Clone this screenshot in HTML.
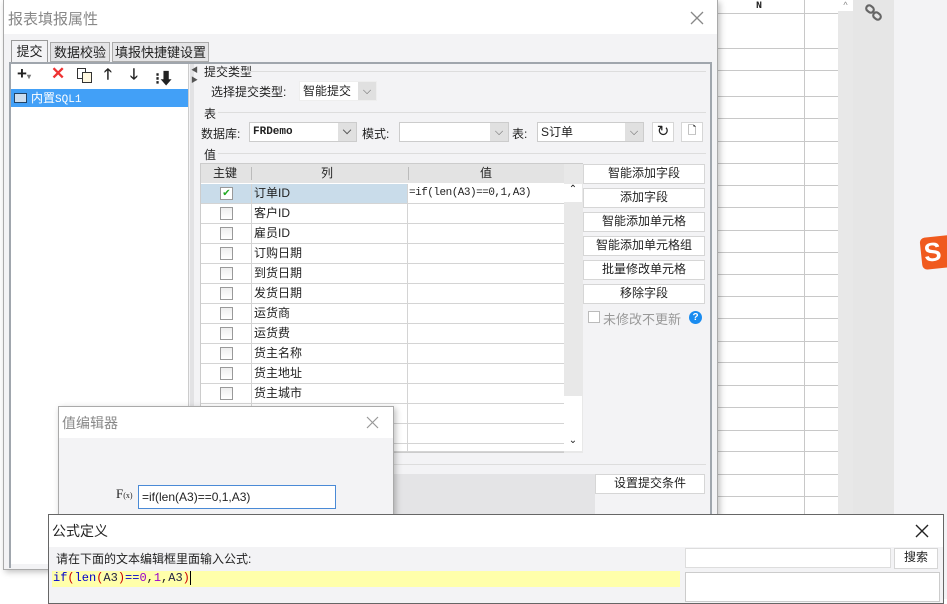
<!DOCTYPE html>
<html><head><meta charset="utf-8"><style>
*{margin:0;padding:0;box-sizing:border-box}
body{width:947px;height:599px;overflow:hidden;position:relative;background:#fff;font-family:"Liberation Sans","Noto Sans CJK SC",sans-serif;font-size:12px;color:#222}
.a{position:absolute}
.hl{position:absolute;left:718px;width:120px;height:1px;background:#c8c8c8}
.btn{position:absolute;background:#fff;border:1px solid #d6d6d6;text-align:center;line-height:17px;font-size:12px}
.cb{position:absolute;width:13px;height:13px;border:1px solid #999;background:linear-gradient(#eee,#fff)}
.row{position:absolute;left:201px;width:363px;height:20px;border-bottom:1px solid #d4d4d4}
.row .c2{position:absolute;left:50px;width:157px;height:19px;border-left:1px solid #d4d4d4;border-right:1px solid #d4d4d4;line-height:19px;padding-left:2px}
.row .cb{left:19px;top:3px}
.combo{position:absolute;background:#fff;border:1px solid #ccc;height:20px;line-height:18px;padding-left:3px}
.combo:after{content:"⌵";position:absolute;right:0;top:0;width:18px;height:18px;background:#e0e0e0;text-align:center;font-size:11px;color:#555}
</style></head><body>
<div class="a" style="left:0;top:0;width:947px;height:599px;background:#fff"></div>
<div class="a" style="left:756px;top:1px;font-size:10px;font-weight:bold;font-family:'Liberation Mono'">N</div>
<div class="hl" style="top:13px"></div><div class="hl" style="top:48px"></div><div class="hl" style="top:70px"></div><div class="hl" style="top:96px"></div><div class="hl" style="top:118px"></div><div class="hl" style="top:141px"></div><div class="hl" style="top:163px"></div><div class="hl" style="top:185px"></div><div class="hl" style="top:207px"></div><div class="hl" style="top:230px"></div><div class="hl" style="top:252px"></div><div class="hl" style="top:274px"></div><div class="hl" style="top:296px"></div><div class="hl" style="top:318px"></div><div class="hl" style="top:341px"></div><div class="hl" style="top:362px"></div><div class="hl" style="top:385px"></div><div class="hl" style="top:407px"></div><div class="hl" style="top:430px"></div><div class="hl" style="top:451px"></div><div class="hl" style="top:474px"></div><div class="hl" style="top:496px"></div>
<div class="a" style="left:804px;top:0;width:1px;height:599px;background:#c8c8c8"></div>
<div class="a" style="left:838px;top:0;width:15px;height:599px;background:#e8e8e8"></div>
<div class="a" style="left:838px;top:0;width:15px;height:11px;background:#fff;font-size:9px;text-align:center;color:#888">^</div>
<div class="a" style="left:853px;top:0;width:41px;height:599px;background:#e6e6e6"></div>
<div class="a" style="left:894px;top:0;width:53px;height:599px;background:#f3f3f5"></div>
<svg class="a" style="left:864px;top:4px" width="20" height="18" viewBox="0 0 20 18"><g fill="none" stroke="#666" stroke-width="2.2"><rect x="2" y="2" width="8" height="6" rx="3" transform="rotate(40 6 5)"/><rect x="9" y="9" width="8" height="6" rx="3" transform="rotate(40 13 12)"/></g></svg>
<div class="a" style="left:921px;top:236px;width:40px;height:32px;background:#f05a1e;border-radius:5px;transform:rotate(-6deg);color:#fff;font-weight:bold;font-size:26px;line-height:30px;padding-left:3px">S</div>
<div class="a" style="left:0;top:0;width:3px;height:599px;background:#fff"></div>

<div class="a" style="left:3px;top:0;width:715px;height:570px;background:#f3f3f5;border:1px solid #aaa;box-shadow:2px 2px 6px rgba(0,0,0,.25)"></div>
<div class="a" style="left:4px;top:0;width:713px;height:34px;background:#fff"></div>
<div class="a" style="left:8px;top:8px;font-size:15px;color:#888">报表填报属性</div>
<svg class="a" style="left:690px;top:11px" width="14" height="14"><path d="M1 1L13 13M13 1L1 13" stroke="#888" stroke-width="1.3"/></svg>
<div class="a" style="left:11px;top:40px;width:37px;height:23px;background:#f3f3f5;border:1px solid #999;border-bottom:none;text-align:center;line-height:22px;font-size:13px">提交</div>
<div class="a" style="left:50px;top:42px;width:60px;height:20px;background:#e4e4e6;border:1px solid #aaa;text-align:center;line-height:19px;font-size:13px">数据校验</div>
<div class="a" style="left:112px;top:42px;width:97px;height:20px;background:#e4e4e6;border:1px solid #aaa;text-align:center;line-height:19px;font-size:13px">填报快捷键设置</div>
<div class="a" style="left:9px;top:62px;width:703px;height:506px;border:2px solid #a0a6ad;border-bottom:none"></div>
<div class="a" style="left:11px;top:64px;width:178px;height:500px;background:#fff;border-right:1px solid #ccc"></div>
<div class="a" style="left:17px;top:64px;font-size:17px;font-weight:bold">+<span style="font-size:8px;color:#777">▾</span></div>
<div class="a" style="left:51px;top:64px;font-size:17px;color:#e33;font-weight:bold">✕</div>
<div class="a" style="left:77px;top:68px;width:9px;height:11px;border:1px solid #333;background:#fff"></div>
<div class="a" style="left:82px;top:72px;width:10px;height:11px;border:1px solid #333;background:#fff8e0"></div>
<div class="a" style="left:104px;top:64px;font-size:15px;font-weight:bold">🡑</div>
<div class="a" style="left:130px;top:64px;font-size:15px;font-weight:bold">🡓</div>
<div class="a" style="left:155px;top:65px;font-size:16px;font-weight:bold;letter-spacing:-2px">⁝⬇</div>
<div class="a" style="left:11px;top:89px;width:177px;height:18px;background:#42a0f7;color:#fff;font-size:12px;line-height:18px;padding-left:20px">内置<span style="font-family:'Liberation Mono';font-size:11px">SQL1</span></div>
<div class="a" style="left:14px;top:93px;width:13px;height:10px;border:1px solid #246;background:#cde"></div>
<div class="a" style="left:190px;top:64px;width:4px;height:500px;background:#e2e2e4"></div>
<div class="a" style="left:191px;top:65px;font-size:7px;color:#555">◀<br>▶</div>
<div class="a" style="left:204px;top:63px;font-size:12px">提交类型</div>
<div class="a" style="left:240px;top:71px;width:466px;height:1px;background:#ddd"></div>
<div class="a" style="left:211px;top:83px">选择提交类型:</div>
<div class="combo" style="left:299px;top:81px;width:78px;border-color:#eee">智能提交</div>
<div class="a" style="left:204px;top:105px">表</div>
<div class="a" style="left:218px;top:112px;width:488px;height:1px;background:#ddd"></div>
<div class="a" style="left:201px;top:125px">数据库:</div>
<div class="combo" style="left:249px;top:122px;width:108px;font-family:'Liberation Mono';font-size:11px;font-weight:bold">FRDemo</div>
<div class="a" style="left:362px;top:125px">模式:</div>
<div class="combo" style="left:399px;top:122px;width:110px"></div>
<div class="a" style="left:512px;top:125px">表:</div>
<div class="combo" style="left:537px;top:122px;width:107px">S订单</div>
<div class="btn" style="left:652px;top:122px;width:22px;height:20px;font-size:15px;line-height:17px">↻</div>
<div class="btn" style="left:681px;top:122px;width:22px;height:20px;font-size:11px">🗋</div>
<div class="a" style="left:204px;top:146px">值</div>
<div class="a" style="left:218px;top:153px;width:488px;height:1px;background:#ddd"></div>
<div class="a" style="left:200px;top:163px;width:383px;height:290px;background:#fff;border:1px solid #ccc"></div>
<div class="a" style="left:201px;top:164px;width:363px;height:19px;background:#e3e3e3;line-height:19px">
<span class="a" style="left:12px">主键</span><span class="a" style="left:120px">列</span><span class="a" style="left:279px">值</span>
<span class="a" style="left:50px;top:3px;width:1px;height:13px;background:#bbb"></span><span class="a" style="left:207px;top:3px;width:1px;height:13px;background:#bbb"></span></div>
<div class="a" style="left:564px;top:164px;width:19px;height:289px;background:#e8e8e8"></div>
<div class="a" style="left:564px;top:184px;width:18px;height:18px;background:#fff;text-align:center;font-size:10px">⌃</div>
<div class="a" style="left:564px;top:396px;width:18px;height:40px;background:#fff"></div>
<div class="a" style="left:564px;top:435px;width:18px;height:16px;background:#fff;text-align:center;font-size:10px">⌄</div>
<div class="row" style="top:184px;background:linear-gradient(90deg,#c9dcea 207px,#fff 207px)"><div class="cb" style="background:#fff;color:#2a2;font-size:10px;line-height:11px;text-align:center">✔</div><div class="c2">订单ID</div><span class="a" style="left:208px;line-height:19px;font-family:'Liberation Mono';font-size:11px;letter-spacing:-0.5px">=if(len(A3)==0,1,A3)</span></div>
<div class="row" style="top:204px"><div class="cb"></div><div class="c2">客户ID</div></div>
<div class="row" style="top:224px"><div class="cb"></div><div class="c2">雇员ID</div></div>
<div class="row" style="top:244px"><div class="cb"></div><div class="c2">订购日期</div></div>
<div class="row" style="top:264px"><div class="cb"></div><div class="c2">到货日期</div></div>
<div class="row" style="top:284px"><div class="cb"></div><div class="c2">发货日期</div></div>
<div class="row" style="top:304px"><div class="cb"></div><div class="c2">运货商</div></div>
<div class="row" style="top:324px"><div class="cb"></div><div class="c2">运货费</div></div>
<div class="row" style="top:344px"><div class="cb"></div><div class="c2">货主名称</div></div>
<div class="row" style="top:364px"><div class="cb"></div><div class="c2">货主地址</div></div>
<div class="row" style="top:384px"><div class="cb"></div><div class="c2">货主城市</div></div>
<div class="row" style="top:404px"><div class="cb"></div><div class="c2"></div></div>
<div class="row" style="top:424px"><div class="cb"></div><div class="c2"></div></div>
<div class="row" style="top:444px;height:8px"><div class="c2" style="height:8px"></div></div>
<div class="btn" style="left:583px;top:164px;width:122px;height:20px">智能添加字段</div>
<div class="btn" style="left:583px;top:188px;width:122px;height:20px">添加字段</div>
<div class="btn" style="left:583px;top:212px;width:122px;height:20px">智能添加单元格</div>
<div class="btn" style="left:583px;top:236px;width:122px;height:20px">智能添加单元格组</div>
<div class="btn" style="left:583px;top:260px;width:122px;height:20px">批量修改单元格</div>
<div class="btn" style="left:583px;top:284px;width:122px;height:20px">移除字段</div>
<div class="a" style="left:588px;top:311px;width:12px;height:12px;border:1px solid #bbb;background:#fff"></div>
<div class="a" style="left:603px;top:309px;color:#999;font-size:13px">未修改不更新</div>
<div class="a" style="left:689px;top:311px;width:13px;height:13px;border-radius:50%;background:#1a8cf0;color:#fff;font-size:10px;font-weight:bold;text-align:center;line-height:13px">?</div>
<div class="a" style="left:200px;top:464px;width:506px;height:1px;background:#ddd"></div>
<div class="a" style="left:200px;top:474px;width:395px;height:94px;background:#e4e4e6"></div>
<div class="btn" style="left:595px;top:474px;width:110px;height:20px">设置提交条件</div>

<div class="a" style="left:58px;top:406px;width:336px;height:120px;background:#f3f3f5;border:1px solid #aaa;box-shadow:2px 2px 6px rgba(0,0,0,.25)"></div>
<div class="a" style="left:59px;top:407px;width:334px;height:31px;background:#fff"></div>
<div class="a" style="left:62px;top:413px;font-size:14px;color:#888">值编辑器</div>
<svg class="a" style="left:366px;top:416px" width="13" height="13"><path d="M1 1L12 12M12 1L1 12" stroke="#999" stroke-width="1.2"/></svg>
<div class="a" style="left:116px;top:486px;font-family:'Liberation Serif';font-size:13px">F<span style="font-size:8px">(x)</span></div>
<div class="a" style="left:138px;top:485px;width:198px;height:24px;background:#fff;border:1px solid #4a8ad6;line-height:22px;padding-left:3px">=if(len(A3)==0,1,A3)</div>

<div class="a" style="left:48px;top:514px;width:896px;height:90px;background:#f3f3f5;border:1px solid #666"></div>
<div class="a" style="left:49px;top:515px;width:894px;height:32px;background:#fff"></div>
<div class="a" style="left:52px;top:521px;font-size:14px">公式定义</div>
<svg class="a" style="left:915px;top:524px" width="14" height="14"><path d="M1 1L13 13M13 1L1 13" stroke="#222" stroke-width="1.4"/></svg>
<div class="a" style="left:56px;top:550px;font-size:12px">请在下面的文本编辑框里面输入公式:</div>
<div class="a" style="left:52px;top:571px;width:628px;height:16px;background:#ffffaa;font-family:'Liberation Mono';font-size:12px;line-height:15px;padding-left:1px"><span style="color:#00c">if</span><span style="color:#c00">(</span><span style="color:#00c">len</span><span style="color:#c00">(</span><span style="color:#224">A3</span><span style="color:#c00">)</span><span style="color:#00c">==</span><span style="color:#90c">0</span>,<span style="color:#90c">1</span>,<span style="color:#224">A3</span><span style="color:#c00">)</span><span style="border-left:1px solid #000"></span></div>
<div class="a" style="left:685px;top:548px;width:206px;height:20px;background:#fff;border:1px solid #ddd"></div>
<div class="btn" style="left:894px;top:548px;width:44px;height:21px">搜索</div>
<div class="a" style="left:685px;top:572px;width:255px;height:30px;background:#fff;border:1px solid #ccc"></div>
</body></html>
